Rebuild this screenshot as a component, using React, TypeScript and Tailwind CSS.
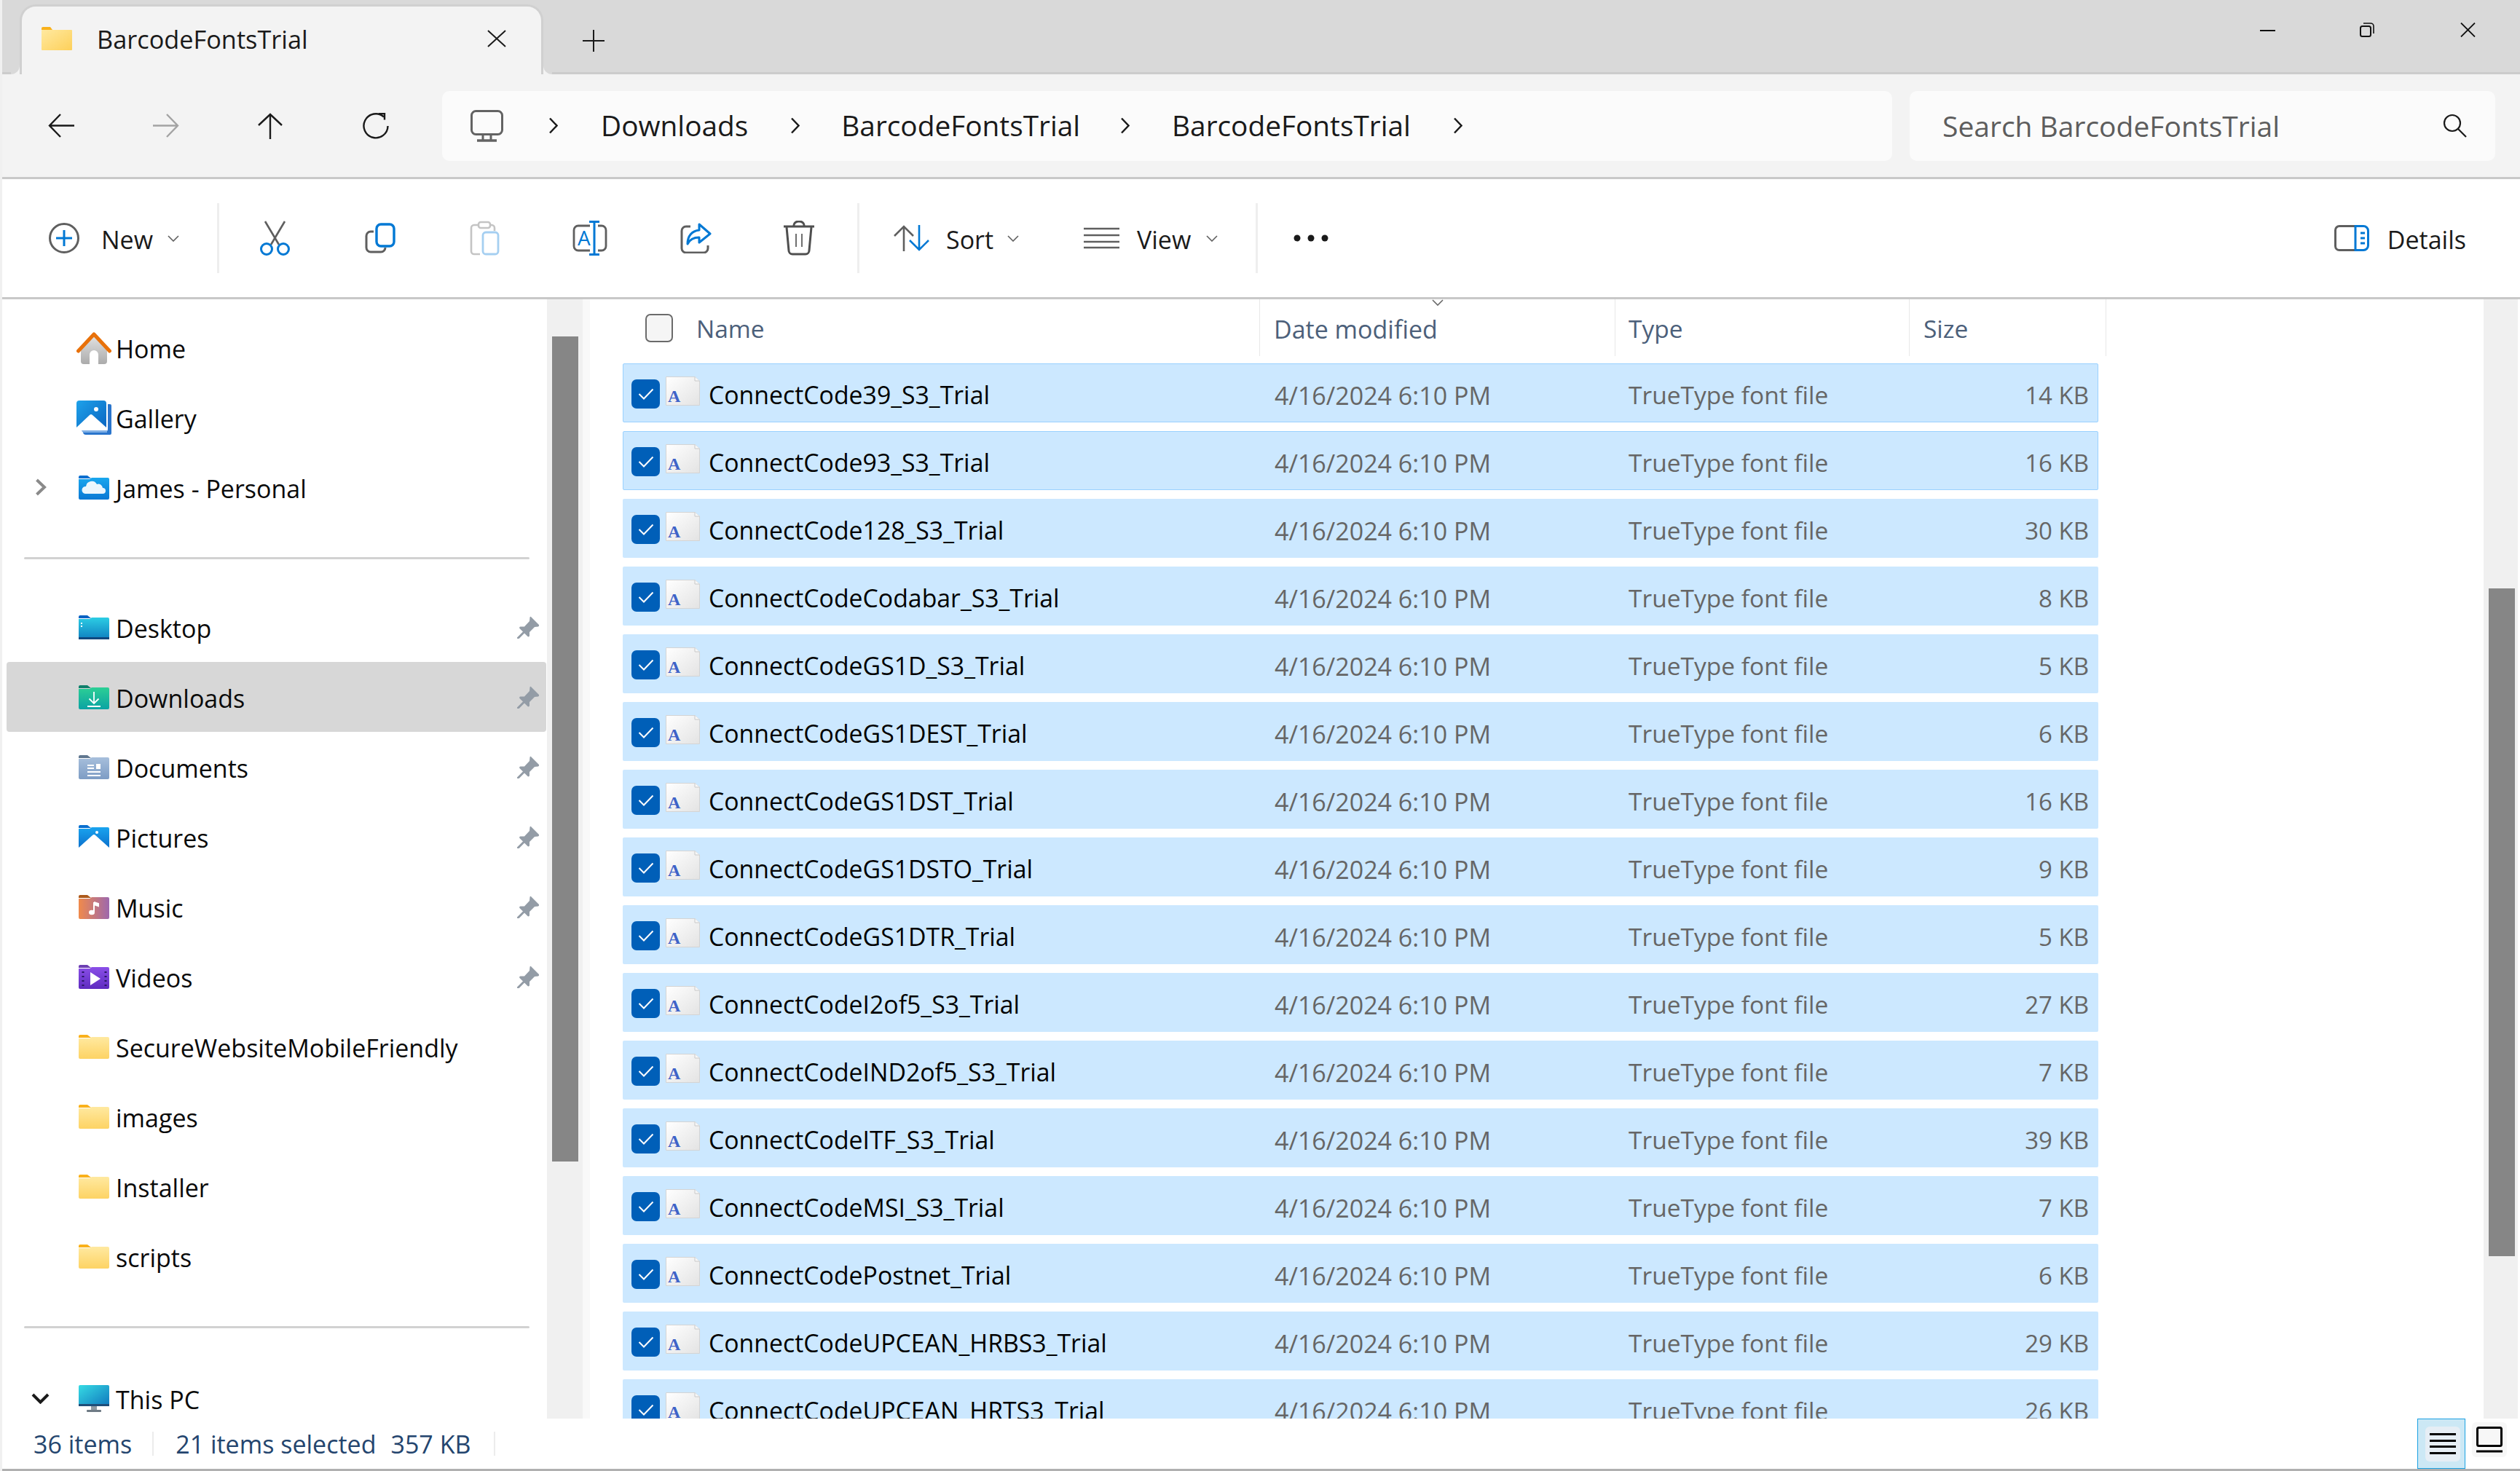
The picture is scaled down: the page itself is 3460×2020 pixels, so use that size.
import React from "react";

type Row = { name: string; size: string };

const rows: Row[] = [
  { name: "ConnectCode39_S3_Trial", size: "14 KB" },
  { name: "ConnectCode93_S3_Trial", size: "16 KB" },
  { name: "ConnectCode128_S3_Trial", size: "30 KB" },
  { name: "ConnectCodeCodabar_S3_Trial", size: "8 KB" },
  { name: "ConnectCodeGS1D_S3_Trial", size: "5 KB" },
  { name: "ConnectCodeGS1DEST_Trial", size: "6 KB" },
  { name: "ConnectCodeGS1DST_Trial", size: "16 KB" },
  { name: "ConnectCodeGS1DSTO_Trial", size: "9 KB" },
  { name: "ConnectCodeGS1DTR_Trial", size: "5 KB" },
  { name: "ConnectCodeI2of5_S3_Trial", size: "27 KB" },
  { name: "ConnectCodeIND2of5_S3_Trial", size: "7 KB" },
  { name: "ConnectCodeITF_S3_Trial", size: "39 KB" },
  { name: "ConnectCodeMSI_S3_Trial", size: "7 KB" },
  { name: "ConnectCodePostnet_Trial", size: "6 KB" },
  { name: "ConnectCodeUPCEAN_HRBS3_Trial", size: "29 KB" },
  { name: "ConnectCodeUPCEAN_HRTS3_Trial", size: "26 KB" },
];

const Folder = ({ id, tab, from, to, children, horizontal }: { id: string; tab: string; from: string; to: string; children?: React.ReactNode; horizontal?: boolean }) => (
  <svg width="42" height="33" viewBox="0 0 42 33" className="shrink-0">
    <defs>
      <linearGradient id={id} x1="0" y1="0" x2={horizontal ? "1" : "0"} y2={horizontal ? "0" : "1"}>
        <stop offset="0" stopColor={from} />
        <stop offset="1" stopColor={to} />
      </linearGradient>
    </defs>
    <path d="M0 2a2 2 0 0 1 2-2h10l5 4h-17z" fill={tab} />
    <path d="M0 5 h15 l3-2 h22 a2 2 0 0 1 2 2 v26 a2 2 0 0 1-2 2 h-38 a2 2 0 0 1-2-2z" fill={`url(#${id})`} />
    {children}
  </svg>
);

const YellowFolder = ({ id }: { id: string }) => <Folder id={id} tab="#f9b11b" from="#ffe9a0" to="#fdd364" />;

const HomeIcon = () => (
  <svg width="48" height="45" viewBox="0 0 48 45">
    <defs>
      <linearGradient id="homeBody" x1="0" y1="0" x2="0" y2="1">
        <stop offset="0" stopColor="#e2e2e2" />
        <stop offset="1" stopColor="#ababab" />
      </linearGradient>
    </defs>
    <path d="M24 6 L42 24 V41 a4 4 0 0 1-4 4 h-8 V32 a6 6 0 0 0-12 0 V45 h-8 a4 4 0 0 1-4-4 V24z" fill="url(#homeBody)" />
    <path d="M2.5 27 L24 4 L45.5 27" fill="none" stroke="#e8710a" strokeWidth="5" strokeLinecap="round" strokeLinejoin="round" />
  </svg>
);

const GalleryIcon = () => (
  <svg width="48" height="47" viewBox="0 0 48 47">
    <defs>
      <linearGradient id="galBody" x1="0" y1="0" x2="1" y2="1">
        <stop offset="0" stopColor="#1ea2ea" />
        <stop offset="1" stopColor="#0a63c0" />
      </linearGradient>
    </defs>
    <path d="M43 5 h3 a2 2 0 0 1 2 2 v38 a2 2 0 0 1-2 2 h-33 a4 4 0 0 1-4-4 h30 a4 4 0 0 0 4-4z" fill="#2a75cc" />
    <path d="M7 41 h35 V44 h-31 a4 4 0 0 1-4-3z" fill="#7fb0e6" />
    <rect x="0" y="0" width="41" height="41" rx="4" fill="url(#galBody)" />
    <path d="M0 37 L18 20 a3 3 0 0 1 4 0 L41 37 v4 h-41z" fill="#fff" />
    <circle cx="27" cy="12" r="3" fill="#fff" />
  </svg>
);

const PcColor = () => (
  <svg width="42" height="37" viewBox="0 0 42 37">
    <defs>
      <linearGradient id="pcBody" x1="0" y1="0" x2="1" y2="1">
        <stop offset="0" stopColor="#36dbe4" />
        <stop offset="1" stopColor="#1077bd" />
      </linearGradient>
    </defs>
    <rect x="17" y="28" width="8" height="6" fill="#8f9aa3" />
    <rect x="11" y="34" width="20" height="3" rx="1" fill="#6f7b85" />
    <rect x="0" y="0" width="42" height="29" rx="2" fill="url(#pcBody)" />
    <rect x="0" y="26" width="42" height="3" fill="#1f4e79" />
  </svg>
);

const Pin = () => (
  <svg width="31" height="31" viewBox="0 0 31 31" className="shrink-0">
    <path d="M19 1 L30 12 a2 2 0 0 1-1 2.5 L24 15 L17 22 V27 a1.5 1.5 0 0 1-2.5 1 L3.5 17 a1.5 1.5 0 0 1 1-2.5 H10 L17 7 L17.5 2 a1 1 0 0 1 1.5-1z" fill="#939ca6" />
    <path d="M9 22.5 L1.5 30" stroke="#939ca6" strokeWidth="3" strokeLinecap="round" />
  </svg>
);

const Chev = ({ className = "" }: { className?: string }) => (
  <svg width="13" height="23" viewBox="0 0 13 23" className={`shrink-0 ${className}`}>
    <path d="M2 1.5 L11.5 11.5 L2 21.5" fill="none" stroke="#1a1a1a" strokeWidth="2.5" />
  </svg>
);

const Caret = () => (
  <svg width="16" height="9" viewBox="0 0 16 9" className="shrink-0">
    <path d="M1 1 L8 8 L15 1" fill="none" stroke="#5f5f5f" strokeWidth="1.6" />
  </svg>
);

const ToolText = ({ children, className = "" }: { children: React.ReactNode; className?: string }) => (
  <span className={`text-[34px] leading-none text-[#1a1a1a] pt-[3px] ${className}`}>{children}</span>
);

const Separator = ({ className = "" }: { className?: string }) => <div className={`w-[3px] h-[96px] bg-[#eeeeee] shrink-0 ${className}`} />;

const CutIcon = () => (
  <svg width="43" height="48" viewBox="0 0 43 48" fill="none" className="ml-[55px] shrink-0">
    <path d="M8 1 L27 33 M35 1 L16 33" stroke="#5f5f5f" strokeWidth="2.6" />
    <circle cx="10" cy="39" r="7.5" stroke="#0078d4" strokeWidth="3" />
    <circle cx="33" cy="39" r="7.5" stroke="#0078d4" strokeWidth="3" />
  </svg>
);

const CopyIcon = () => (
  <svg width="42" height="42" viewBox="0 0 42 42" fill="none" className="ml-[102px] shrink-0">
    <path d="M12 12 H8 a6 6 0 0 0-6 6 v16 a6 6 0 0 0 6 6 h14 a6 6 0 0 0 6-6" stroke="#5f5f5f" strokeWidth="3" />
    <rect x="16" y="2" width="24" height="30" rx="6" stroke="#0078d4" strokeWidth="3.4" />
  </svg>
);

const PasteIcon = () => (
  <svg width="41" height="48" viewBox="0 0 41 48" fill="none" className="ml-[102px] shrink-0">
    <path d="M12 6 H6 a4 4 0 0 0-4 4 v32 a4 4 0 0 0 4 4 h8 M28 6 h2 a4 4 0 0 1 4 4 v4" stroke="#c4c4c4" strokeWidth="2.6" />
    <rect x="12" y="2" width="16" height="8" rx="3" stroke="#c4c4c4" strokeWidth="2.6" />
    <rect x="18" y="16" width="21" height="30" rx="4" stroke="#a5cff1" strokeWidth="2.8" />
  </svg>
);

const RenameIcon = () => (
  <svg width="48" height="48" viewBox="0 0 48 48" fill="none" className="ml-[100px] shrink-0">
    <path d="M24 7 H8 a6 6 0 0 0-6 6 v22 a6 6 0 0 0 6 6 h16 M35 7 h5 a6 6 0 0 1 6 6 v22 a6 6 0 0 1-6 6 h-5" stroke="#5f5f5f" strokeWidth="2.8" />
    <path d="M23 1.5 h14 M23 46.5 h14 M30 2 v44" stroke="#0078d4" strokeWidth="3" />
    <text x="7" y="34" fontFamily="'Open Sans', sans-serif" fontSize="28" fill="#0078d4">A</text>
  </svg>
);

const ShareIcon = () => (
  <svg width="44" height="42" viewBox="0 0 44 42" fill="none" className="ml-[99px] shrink-0">
    <path d="M15 5 H9 a6 6 0 0 0-6 6 v24 a6 6 0 0 0 6 6 h24 a6 6 0 0 0 6-6 v-4" stroke="#5f5f5f" strokeWidth="3" />
    <path d="M27 2 L42 15 L27 27 V20 C19 20 14 23 11 29 C11 18 17 11 27 10z" stroke="#0078d4" strokeWidth="3" strokeLinejoin="round" />
  </svg>
);

const TrashIcon = () => (
  <svg width="44" height="48" viewBox="0 0 44 48" fill="none" className="ml-[98px] shrink-0">
    <path d="M1 8 H43 M15 8 V6 a7 5 0 0 1 14 0 V8" stroke="#4f4f4f" strokeWidth="3" />
    <path d="M5 9 L8 41 a5 5 0 0 0 5 5 h18 a5 5 0 0 0 5-5 L39 9" stroke="#4f4f4f" strokeWidth="3" />
    <path d="M18 18 V36 M26 18 V36" stroke="#6f6f6f" strokeWidth="2" />
  </svg>
);

const NavItem = ({ icon, label, pinned, selected, chevron }: { icon: React.ReactNode; label: string; pinned?: boolean; selected?: boolean; chevron?: "right" | "down" }) => (
  <div className={`ml-[6px] w-[741px] h-[96px] shrink-0 flex items-center rounded-[4px] ${selected ? "bg-[#d7d7d7]" : ""}`}>
    <div className="w-[96px] shrink-0 pl-[34px] flex items-center">
      {chevron === "right" && (
        <svg width="16" height="24" viewBox="0 0 16 24" className="ml-[5px]">
          <path d="M2.5 2 L13 12 L2.5 22" fill="none" stroke="#8a8a8a" strokeWidth="4" />
        </svg>
      )}
      {chevron === "down" && (
        <svg width="25" height="15" viewBox="0 0 25 15">
          <path d="M2 2 L12.5 12.5 L23 2" fill="none" stroke="#1a1a1a" strokeWidth="4" />
        </svg>
      )}
    </div>
    <div className="w-[48px] shrink-0 flex justify-center">{icon}</div>
    <span className="ml-[6px] text-[34px] leading-none text-[#0a0a0a] pt-[3px]">{label}</span>
    {pinned && (
      <div className="ml-auto mr-[9px]">
        <Pin />
      </div>
    )}
  </div>
);

const NavDivider = ({ className = "" }: { className?: string }) => <div className={`ml-[30px] w-[694px] h-[3px] shrink-0 rounded-full bg-[#d2d2d2] ${className}`} />;

const FontFile = () => (
  <svg width="47" height="40" viewBox="0 0 47 40" className="shrink-0 -mt-[5px]">
    <defs>
      <linearGradient id="fileBody" x1="0" y1="0" x2="1" y2="1">
        <stop offset="0" stopColor="#ffffff" />
        <stop offset="1" stopColor="#e3e3e3" />
      </linearGradient>
    </defs>
    <path d="M0.5 0.5 H40 L46.5 6 V39.5 H0.5z" fill="url(#fileBody)" stroke="#d4d4d4" />
    <path d="M40 0.5 V6 H46.5" fill="#f7f7f7" stroke="#c8c8c8" />
    <text x="3" y="35" fontFamily="'Liberation Serif', serif" fontWeight="700" fontSize="24" fill="#3f63c8">A</text>
  </svg>
);

const FileRow = ({ row, bordered }: { row: Row; bordered: boolean }) => (
  <div className={`ml-[45px] w-[2026px] h-[81px] mb-[12px] shrink-0 rounded-[2px] bg-[#cce8ff] border grid grid-cols-[894px_486px_1fr_auto] items-center ${bordered ? "border-[#99d1ff]" : "border-transparent"}`}>
    <div className="flex items-center pl-[11px]">
      <div className="w-[39px] h-[40px] mt-[3px] shrink-0 rounded-[7px] bg-[#005fb8] flex items-center justify-center">
        <svg width="22" height="16" viewBox="0 0 22 16">
          <path d="M1.5 8 L8 14.5 L20.5 1.5" fill="none" stroke="#ffffff" strokeWidth="2" />
        </svg>
      </div>
      <div className="ml-[8px]">
        <FontFile />
      </div>
      <span className="ml-[12px] text-[33.8px] leading-none text-black pt-[6px] whitespace-nowrap">{row.name}</span>
    </div>
    <span className="text-[34px] leading-none text-[#666666] pt-[6px]">4/16/2024 6:10 PM</span>
    <span className="text-[33.5px] leading-none text-[#666666] pt-[6px]">TrueType font file</span>
    <span className="text-[33px] leading-none text-[#666666] pt-[6px] pr-[12px] text-right">{row.size}</span>
  </div>
);

const HeaderCell = ({ className = "", children }: { className?: string; children: React.ReactNode }) => (
  <div className={`h-[78px] shrink-0 border-r border-[#e8e8e8] flex items-center text-[33.5px] leading-none text-[#4c607a] ${className}`}>{children}</div>
);

export default function App() {
  return (
    <div className="w-[3460px] h-[2020px] overflow-hidden flex flex-col bg-white border-l-[3px] border-[#f0f0f0] font-['Open_Sans',sans-serif]">
      {/* tab strip */}
      <div className="h-[102px] shrink-0 bg-[#d9d9d9] border-b-[3px] border-[#cccccc] flex items-start">
        <div className="relative ml-[24px] mt-[6px] w-[719px] h-[96px] shrink-0 bg-[#f3f3f3] border-t-[3px] border-x-[3px] border-[#d0d0d0] border-b-0 rounded-t-[22px] flex items-center pl-[27px]">
          <svg width="42" height="32" viewBox="0 0 42 32" className="shrink-0 -mt-[6px]">
            <defs>
              <linearGradient id="tabFolder" x1="0" y1="0" x2="1" y2="1">
                <stop offset="0" stopColor="#ffe9a0" />
                <stop offset="1" stopColor="#fdd05a" />
              </linearGradient>
            </defs>
            <path d="M0 2a2 2 0 0 1 2-2h10l3 4h-15z" fill="#f9b11b" />
            <rect x="0" y="4" width="42" height="28" rx="1" fill="url(#tabFolder)" />
          </svg>
          <span className="ml-[34px] text-[34.3px] leading-none text-[#1a1a1a] whitespace-nowrap -mt-[2px]">BarcodeFontsTrial</span>
          <svg width="26" height="24" viewBox="0 0 26 24" className="absolute left-[639px] top-[32px]">
            <path d="M1 1 L25 23 M25 1 L1 23" stroke="#1a1a1a" strokeWidth="2" />
          </svg>
          <div className="absolute -left-[15px] bottom-0 w-[12px] h-[12px] bg-[#f3f3f3]">
            <div className="w-full h-full bg-[#d9d9d9] rounded-br-[12px]" />
          </div>
          <div className="absolute -right-[15px] bottom-0 w-[12px] h-[12px] bg-[#f3f3f3]">
            <div className="w-full h-full bg-[#d9d9d9] rounded-bl-[12px]" />
          </div>
        </div>
        <svg width="30" height="30" viewBox="0 0 30 30" className="ml-[54px] mt-[41px] shrink-0">
          <path d="M15 0 V30 M0 15 H30" stroke="#1a1a1a" strokeWidth="2" />
        </svg>
        <div className="ml-auto flex items-start mr-[61px] mt-[31px]">
          <div className="w-[21px] h-[2px] mt-[10px] bg-[#111111]" />
          <svg width="20" height="20" viewBox="0 0 20 20" fill="none" className="ml-[116px]">
            <rect x="1" y="5" width="14" height="14" rx="2.5" stroke="#111111" strokeWidth="2" />
            <path d="M5 1 H15 a4 4 0 0 1 4 4 V15" stroke="#111111" strokeWidth="1.6" />
          </svg>
          <svg width="21" height="20" viewBox="0 0 21 20" className="ml-[118px]">
            <path d="M1 0.5 L20 19.5 M20 0.5 L1 19.5" stroke="#111111" strokeWidth="1.8" />
          </svg>
        </div>
      </div>

      {/* address row */}
      <div className="h-[144px] shrink-0 bg-[#f3f3f3] border-b-[3px] border-[#c8c8c8] flex items-center pl-[63px]">
        <svg width="36" height="33" viewBox="0 0 36 33" className="shrink-0">
          <path d="M36 16.5 H2 M17 1 L2 16.5 L17 32" fill="none" stroke="#1a1a1a" strokeWidth="2.4" />
        </svg>
        <svg width="36" height="33" viewBox="0 0 36 33" className="ml-[108px] shrink-0">
          <path d="M0 16.5 H34 M19 1 L34 16.5 L19 32" fill="none" stroke="#a3a3a3" strokeWidth="2.4" />
        </svg>
        <svg width="34" height="36" viewBox="0 0 34 36" className="ml-[108px] shrink-0">
          <path d="M17 36 V2 M1 17 L17 2 L33 17" fill="none" stroke="#1a1a1a" strokeWidth="2.4" />
        </svg>
        <svg width="36" height="36" viewBox="0 0 36 36" className="ml-[110px] shrink-0">
          <path d="M29 5.5 A16.5 16.5 0 1 0 34.5 18" fill="none" stroke="#1a1a1a" strokeWidth="2.4" />
          <path d="M22 1 H30 V9.5" fill="none" stroke="#1a1a1a" strokeWidth="2.4" />
        </svg>
        <div className="ml-[73px] w-[1991px] h-[96px] shrink-0 bg-[#fbfbfb] rounded-[10px] flex items-center pl-[39px] text-[38.8px] leading-none text-[#1a1a1a]">
          <svg width="45" height="44" viewBox="0 0 45 44" fill="none" className="shrink-0">
            <rect x="1.5" y="1.5" width="42" height="32" rx="6" stroke="#636363" strokeWidth="3" />
            <path d="M17 34 V41 M28 34 V41" stroke="#636363" strokeWidth="3" />
            <path d="M9 42 H36" stroke="#636363" strokeWidth="3.5" />
          </svg>
          <Chev className="ml-[62px]" />
          <span className="ml-[59px]">Downloads</span>
          <Chev className="ml-[58px]" />
          <span className="ml-[57px]">BarcodeFontsTrial</span>
          <Chev className="ml-[55px]" />
          <span className="ml-[58px]">BarcodeFontsTrial</span>
          <Chev className="ml-[58px]" />
        </div>
        <div className="ml-[24px] w-[804px] h-[96px] shrink-0 bg-[#fbfbfb] rounded-[10px] flex items-center pl-[45px] pr-[39px] text-[39px] leading-none text-[#5d5d5d]">
          <span>Search BarcodeFontsTrial</span>
          <svg width="33" height="33" viewBox="0 0 33 33" fill="none" className="ml-auto shrink-0">
            <circle cx="13" cy="13" r="11" stroke="#1a1a1a" strokeWidth="2.2" />
            <path d="M21 21 L32 32" stroke="#1a1a1a" strokeWidth="2.2" />
          </svg>
        </div>
      </div>

      {/* command bar */}
      <div className="h-[165px] shrink-0 bg-white border-b-[3px] border-[#c8c8c8] flex items-center pl-[64px] pr-[74px]">
        <svg width="42" height="44" viewBox="0 0 42 44" fill="none" className="shrink-0">
          <circle cx="21" cy="22" r="19.5" stroke="#5f5f5f" strokeWidth="3" />
          <path d="M21 11 V33 M10 22 H32" stroke="#0078d4" strokeWidth="3" />
        </svg>
        <ToolText className="ml-[30px] w-[91px]">New</ToolText>
        <Caret />
        <Separator className="ml-[52px]" />
        <CutIcon />
        <CopyIcon />
        <PasteIcon />
        <RenameIcon />
        <ShareIcon />
        <TrashIcon />
        <Separator className="ml-[58px]" />
        <svg width="49" height="36" viewBox="0 0 49 36" fill="none" className="ml-[47px] shrink-0">
          <path d="M14 36 V2 M1 15 L14 2 L27 15" stroke="#5f5f5f" strokeWidth="2.6" />
          <path d="M35 0 V34 M22 21 L35 34 L48 21" stroke="#0078d4" strokeWidth="2.6" />
        </svg>
        <ToolText className="ml-[23px] w-[84px]">Sort</ToolText>
        <Caret />
        <svg width="49" height="30" viewBox="0 0 49 30" className="ml-[89px] shrink-0">
          <path d="M0 2 H49 M0 11 H49 M0 20 H49 M0 28 H49" stroke="#5f5f5f" strokeWidth="2.6" />
        </svg>
        <ToolText className="ml-[24px] w-[95px]">View</ToolText>
        <Caret />
        <Separator className="ml-[52px]" />
        <svg width="48" height="10" viewBox="0 0 48 10" className="ml-[49px] shrink-0">
          <circle cx="5" cy="5" r="4.5" fill="#1a1a1a" />
          <circle cx="24" cy="5" r="4.5" fill="#1a1a1a" />
          <circle cx="43" cy="5" r="4.5" fill="#1a1a1a" />
        </svg>
        <svg width="48" height="36" viewBox="0 0 48 36" fill="none" className="ml-auto shrink-0">
          <path d="M31 1.5 H7 a5.5 5.5 0 0 0-5.5 5.5 v22 a5.5 5.5 0 0 0 5.5 5.5 H31" stroke="#5f5f5f" strokeWidth="3" />
          <path d="M29 1.5 H40 a6.5 6.5 0 0 1 6.5 6.5 v20 a6.5 6.5 0 0 1-6.5 6.5 H29z" stroke="#0078d4" strokeWidth="3" />
          <path d="M36 11 h6 M36 18 h6 M36 25 h6" stroke="#0078d4" strokeWidth="3" />
        </svg>
        <ToolText className="ml-[25px]">Details</ToolText>
      </div>

      {/* main */}
      <div className="h-[1537px] shrink-0 flex overflow-hidden">
        <div className="w-[748px] shrink-0 overflow-hidden flex flex-col pt-[18px] bg-white">
          <NavItem icon={<HomeIcon />} label="Home" />
          <NavItem icon={<GalleryIcon />} label="Gallery" />
          <NavItem
            chevron="right"
            label="James - Personal"
            icon={
              <Folder id="oneDrive" tab="#0a6fcf" from="#1aa7ee" to="#0a78d4">
                <path d="M9 25 a5 5 0 0 1 1-10 a8 8 0 0 1 15-3 a6 6 0 0 1 8 5 a4 4 0 0 1 0 8z" fill="#ffffff" fillOpacity="0.92" />
              </Folder>
            }
          />
          <NavDivider className="mt-[48px] mb-[45px]" />
          <NavItem
            pinned
            label="Desktop"
            icon={
              <Folder id="desktop" tab="#0b62c3" from="#2ccde4" to="#0f7fc0">
                <rect x="0" y="30" width="42" height="3" fill="#10487f" />
                <rect x="3" y="10" width="2" height="2" fill="#ffffff" />
                <rect x="3" y="14" width="2" height="2" fill="#ffffff" />
              </Folder>
            }
          />
          <NavItem
            pinned
            selected
            label="Downloads"
            icon={
              <Folder id="downloads" tab="#0f7f6b" from="#2ccf95" to="#0ba3a3">
                <path d="M21 9 V25 M14.5 18.5 L21 25 L27.5 18.5 M12 29 H30" fill="none" stroke="#ffffff" strokeWidth="1.8" />
              </Folder>
            }
          />
          <NavItem
            pinned
            label="Documents"
            icon={
              <Folder id="documents" tab="#60778f" from="#a7bfdc" to="#7d9cc4">
                <path d="M12 14 H21 M12 18 H21 M12 23 H30 M12 28 H30" stroke="#ffffff" strokeWidth="2" />
                <rect x="24" y="12" width="6" height="7" fill="#ffffff" />
              </Folder>
            }
          />
          <NavItem
            pinned
            label="Pictures"
            icon={
              <Folder id="pictures" tab="#0a6fcf" from="#1aa4ef" to="#0a6dca">
                <path d="M0 31 L19 14 a3 3 0 0 1 4 0 L42 31 V33 H0z" fill="#ffffff" />
                <circle cx="25" cy="10" r="2" fill="#ffffff" />
              </Folder>
            }
          />
          <NavItem
            pinned
            label="Music"
            icon={
              <Folder id="music" tab="#ad5a1b" from="#f08a4b" to="#9d68ad" horizontal>
                <path d="M21 10 V23 M21 10 L27 12 V15 L21 13" stroke="#ffffff" strokeWidth="2" fill="#ffffff" />
                <ellipse cx="18" cy="24" rx="4" ry="3.2" fill="#ffffff" />
              </Folder>
            }
          />
          <NavItem
            pinned
            label="Videos"
            icon={
              <Folder id="videos" tab="#6d3fb2" from="#8a4fe8" to="#5e2bbf">
                <path d="M16 10 L30 19 L16 28z" fill="#ffffff" />
                <path d="M6 9 v2 M6 15 v2 M6 21 v2 M6 27 v2 M37 9 v2 M37 15 v2 M37 21 v2 M37 27 v2" stroke="#2a1666" strokeWidth="3" />
              </Folder>
            }
          />
          <NavItem icon={<YellowFolder id="yf1" />} label="SecureWebsiteMobileFriendly" />
          <NavItem icon={<YellowFolder id="yf2" />} label="images" />
          <NavItem icon={<YellowFolder id="yf3" />} label="Installer" />
          <NavItem icon={<YellowFolder id="yf4" />} label="scripts" />
          <NavDivider className="mt-[48px] mb-[48px]" />
          <NavItem chevron="down" icon={<PcColor />} label="This PC" />
        </div>

        <div className="w-[49px] shrink-0 bg-[#f0f0f0] pl-[7px] pt-[51px]">
          <div className="w-[36px] h-[1133px] bg-[#868686]" />
        </div>
        <div className="w-[10px] shrink-0 bg-[#f9f9f9]" />

        <div className="w-[2600px] shrink-0 overflow-hidden bg-white">
          <div className="flex relative">
            <HeaderCell className="w-[920px] pl-[76px]">
              <div className="w-[38px] h-[39px] rounded-[7px] border-[2.5px] border-[#6b6b6b] bg-[#f5f5f5] shrink-0" />
              <span className="ml-[32px] pt-[4px]">Name</span>
            </HeaderCell>
            <HeaderCell className="w-[488px] pl-[19px]">
              <span className="pt-[4px] text-[34px]">Date modified</span>
            </HeaderCell>
            <HeaderCell className="w-[404px] pl-[18px]">
              <span className="pt-[4px]">Type</span>
            </HeaderCell>
            <HeaderCell className="w-[270px] pl-[19px]">
              <span className="pt-[4px]">Size</span>
            </HeaderCell>
            <svg width="16" height="9" viewBox="0 0 16 9" className="absolute left-[1156px] top-0">
              <path d="M1 1 L8 8 L15 1" fill="none" stroke="#666666" strokeWidth="1.6" />
            </svg>
          </div>
          <div className="mt-[10px]">
            {rows.map((row, i) => (
              <FileRow key={row.name} row={row} bordered={i < 2} />
            ))}
          </div>
        </div>

        <div className="w-[47px] shrink-0 bg-[#f0f0f0] pl-[7px] pt-[397px]">
          <div className="w-[36px] h-[917px] bg-[#868686]" />
        </div>
      </div>

      {/* status bar */}
      <div className="h-[72px] shrink-0 border-b-[3px] border-[#b0b0b0] bg-white flex items-center text-[34px] leading-none text-[#24456e]">
        <span className="ml-[43px]">36 items</span>
        <div className="ml-[28px] w-[2px] h-[33px] bg-[#ececec] shrink-0" />
        <span className="ml-[30px]">21 items selected</span>
        <span className="ml-[20px]">357 KB</span>
        <div className="ml-[32px] w-[2px] h-[33px] bg-[#ececec] shrink-0" />
        <div className="ml-auto w-[66px] h-[69px] shrink-0 border border-[#1ba1e2] bg-[#cce8f5] flex items-center justify-center pl-[3px]">
          <div className="w-[48px] h-[48px] rounded-[6px] bg-[#e6eef5] flex items-center justify-center">
            <svg width="36" height="29" viewBox="0 0 36 29">
              <path d="M0 1.5 H36 M0 10.5 H36 M0 18.5 H36 M0 27.5 H36" stroke="#000000" strokeWidth="3" />
            </svg>
          </div>
        </div>
        <div className="ml-[9px] mr-[18px] mb-[11px] w-[48px] h-[48px] shrink-0 rounded-[6px] bg-[#f7f7f7] flex items-center justify-center">
          <svg width="36" height="36" viewBox="0 0 36 36" fill="none">
            <rect x="1.5" y="1.5" width="33" height="25" rx="2" stroke="#000000" strokeWidth="3" />
            <path d="M0 34 H36" stroke="#000000" strokeWidth="3" />
          </svg>
        </div>
      </div>
    </div>
  );
}
